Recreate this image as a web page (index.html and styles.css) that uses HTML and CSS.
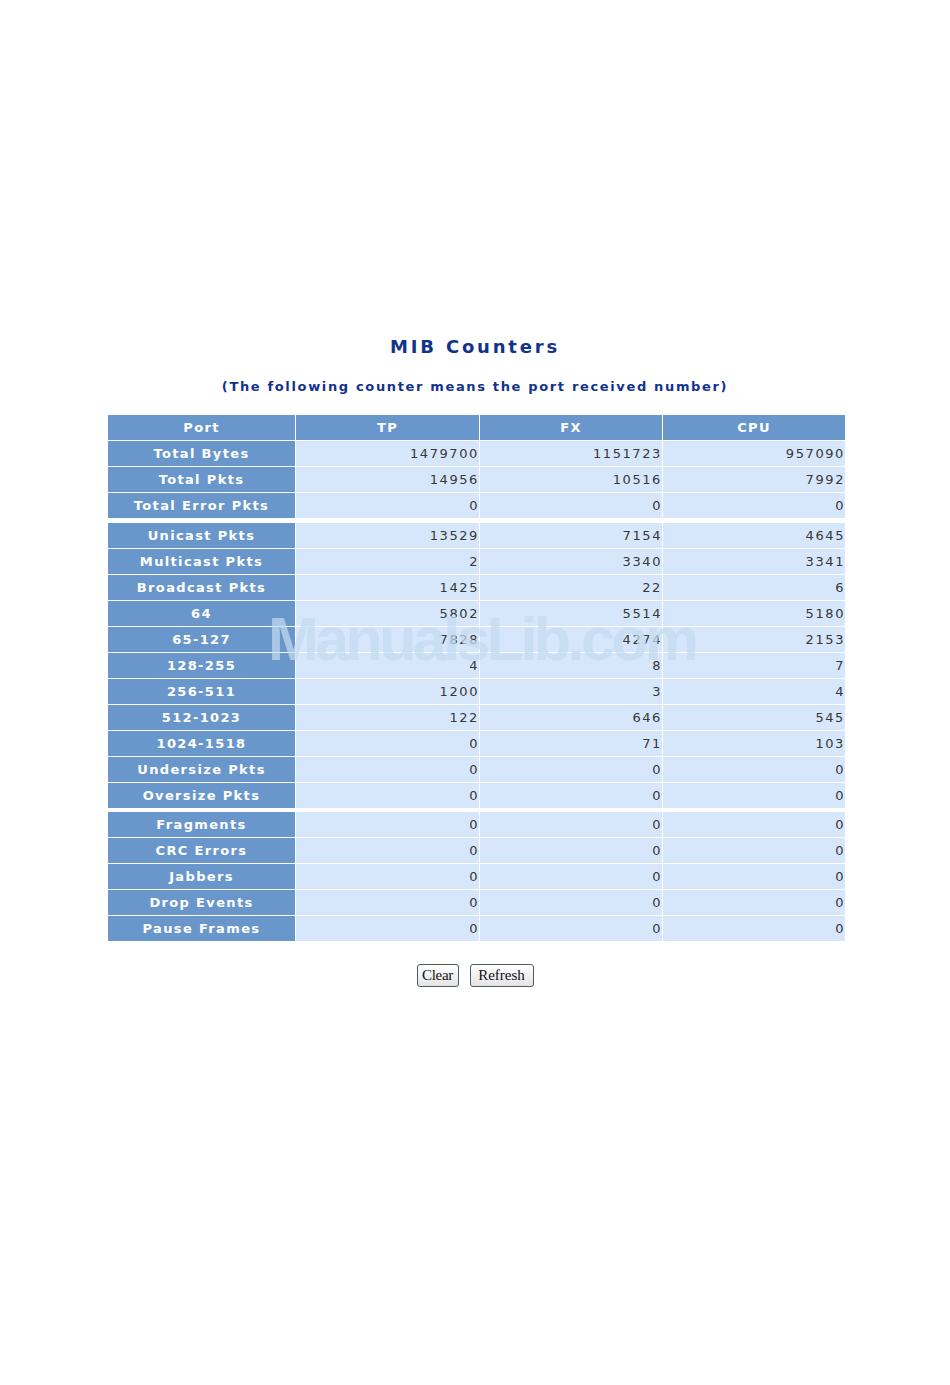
FILE: index.html
```html
<!DOCTYPE html>
<html>
<head>
<meta charset="utf-8">
<title>MIB Counters</title>
<link rel="stylesheet" href="styles.css">
</head>
<body>
<div class="page">
  <h1 class="title">MIB Counters</h1>
  <p class="subtitle">(The following counter means the port received number)</p>
  <table class="mib">
    <colgroup>
      <col class="c-port"><col class="c-tp"><col class="c-fx"><col class="c-cpu">
    </colgroup>
    <tbody>
      <tr class="head"><th>Port</th><th>TP</th><th>FX</th><th>CPU</th></tr>
      <tr><th>Total Bytes</th><td>1479700</td><td>1151723</td><td>957090</td></tr>
      <tr><th>Total Pkts</th><td>14956</td><td>10516</td><td>7992</td></tr>
      <tr><th>Total Error Pkts</th><td>0</td><td>0</td><td>0</td></tr>
      <tr class="gap gap-wide"><td colspan="4"></td></tr>
      <tr><th>Unicast Pkts</th><td>13529</td><td>7154</td><td>4645</td></tr>
      <tr><th>Multicast Pkts</th><td>2</td><td>3340</td><td>3341</td></tr>
      <tr><th>Broadcast Pkts</th><td>1425</td><td>22</td><td>6</td></tr>
      <tr><th>64</th><td>5802</td><td>5514</td><td>5180</td></tr>
      <tr><th>65-127</th><td>7828</td><td>4274</td><td>2153</td></tr>
      <tr><th>128-255</th><td>4</td><td>8</td><td>7</td></tr>
      <tr><th>256-511</th><td>1200</td><td>3</td><td>4</td></tr>
      <tr><th>512-1023</th><td>122</td><td>646</td><td>545</td></tr>
      <tr><th>1024-1518</th><td>0</td><td>71</td><td>103</td></tr>
      <tr><th>Undersize Pkts</th><td>0</td><td>0</td><td>0</td></tr>
      <tr><th>Oversize Pkts</th><td>0</td><td>0</td><td>0</td></tr>
      <tr class="gap"><td colspan="4"></td></tr>
      <tr><th>Fragments</th><td>0</td><td>0</td><td>0</td></tr>
      <tr><th>CRC Errors</th><td>0</td><td>0</td><td>0</td></tr>
      <tr><th>Jabbers</th><td>0</td><td>0</td><td>0</td></tr>
      <tr><th>Drop Events</th><td>0</td><td>0</td><td>0</td></tr>
      <tr><th>Pause Frames</th><td>0</td><td>0</td><td>0</td></tr>
    </tbody>
  </table>
  <div class="buttons">
    <button class="btn btn-clear" type="button">Clear</button>
    <button class="btn btn-refresh" type="button">Refresh</button>
  </div>
  <div class="watermark">ManualsLib.com</div>
</div>
</body>
</html>
```

FILE: styles.css
```css
html, body {
  margin: 0;
  padding: 0;
  background: #ffffff;
}

.page {
  position: relative;
  width: 950px;
  height: 1385px;
  padding-top: 336px;
  box-sizing: border-box;
  font-family: "DejaVu Sans", Verdana, sans-serif;
}

.title {
  margin: 0;
  text-align: center;
  font-size: 18px;
  line-height: 22px;
  font-weight: bold;
  letter-spacing: 2.8px;
  color: #12338c;
}

.subtitle {
  margin: 21px 0 0 0;
  text-align: center;
  font-size: 13px;
  line-height: 16px;
  font-weight: bold;
  letter-spacing: 1.65px;
  color: #12338c;
}

.mib {
  width: 739px;
  margin: 19px 0 0 107px;
  border-collapse: separate;
  border-spacing: 1px 1px;
  table-layout: fixed;
}

.c-port { width: 187px; }
.c-tp { width: 183px; }
.c-fx { width: 182px; }
.c-cpu { width: 182px; }

.mib th,
.mib td {
  height: 25px;
  padding: 0;
  box-sizing: border-box;
  font-size: 13px;
  line-height: 25px;
  white-space: nowrap;
}

.mib th {
  background: #6a97cb;
  color: #ffffff;
  font-weight: bold;
  text-align: center;
  letter-spacing: 1.35px;
}

.mib td {
  background: #d6e7fb;
  color: #383838;
  text-align: right;
  padding-right: 0;
  letter-spacing: 1.6px;
}

.mib tr.gap td {
  height: 2px;
  line-height: 2px;
  background: transparent;
}

.mib tr.gap-wide td {
  height: 3px;
  line-height: 3px;
}

.buttons {
  margin-top: 22px;
  display: flex;
  justify-content: center;
  gap: 11px;
}

.btn {
  height: 23px;
  font-family: "Liberation Serif", "Times New Roman", serif;
  font-size: 15px;
  color: #111111;
  letter-spacing: -0.3px;
  background: linear-gradient(#ffffff, #e4e4e4);
  border: 1px solid #4f5a66;
  border-radius: 3px;
}

.btn-clear {
  width: 42px;
  padding: 0;
}

.btn-refresh {
  width: 64px;
  padding: 0;
  letter-spacing: 0;
}

.watermark {
  position: absolute;
  left: 268px;
  top: 604px;
  font-family: "Liberation Sans", Arial, sans-serif;
  font-weight: bold;
  font-size: 61px;
  line-height: 70px;
  letter-spacing: -3.6px;
  color: rgba(196, 217, 240, 0.72);
  pointer-events: none;
  white-space: nowrap;
}
```
